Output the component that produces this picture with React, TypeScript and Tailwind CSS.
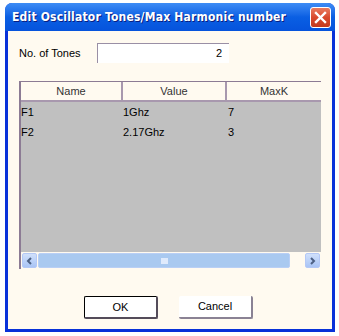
import React from 'react'

const rows = [
  { name: 'F1', value: '1Ghz', maxk: '7' },
  { name: 'F2', value: '2.17Ghz', maxk: '3' },
]

function CloseButton() {
  return (
    <div className="w-[21px] h-[21px] rounded-[3px] border border-white bg-gradient-to-b from-[#e87a5e] via-[#d9492c] to-[#c23a1e] flex items-center justify-center">
      <svg width="13" height="13" viewBox="0 0 13 13">
        <path d="M2 2 L11 11 M11 2 L2 11" stroke="white" strokeWidth="2.4" strokeLinecap="square" />
      </svg>
    </div>
  )
}

function ScrollArrow({ dir }: { dir: 'left' | 'right' }) {
  return (
    <div className="w-[15px] h-[15px] rounded-[2px] border border-[#b4c8f6] bg-gradient-to-b from-[#d0e0fb] to-[#a9c4f5] flex items-center justify-center">
      <svg width="7" height="8" viewBox="0 0 7 8">
        <path d={dir === 'left' ? 'M5 1 L2 4 L5 7' : 'M2 1 L5 4 L2 7'} stroke="#4d6185" strokeWidth="2" fill="none" />
      </svg>
    </div>
  )
}

export default function App() {
  return (
    <div className="w-[339px] h-[336px] bg-white relative overflow-hidden" style={{ fontFamily: '"Liberation Sans", Arial, sans-serif' }}>
      <div className="absolute left-[5px] top-[3px] w-[330px] h-[329px] flex flex-col rounded-t-[7px] overflow-hidden bg-[#0831d9]">
        <div className="h-[28px] shrink-0 flex items-center justify-between pl-[7px] pr-[4px] bg-gradient-to-b from-[#3d8cf5] via-[#0a5fe3] to-[#0653dc]">
          <span className="text-white font-bold text-[12px] tracking-[0.2px] [text-shadow:1px_1px_#0a1e80]" style={{ fontFamily: '"DejaVu Sans Condensed", "DejaVu Sans", sans-serif' }}>
            Edit Oscillator Tones/Max Harmonic number
          </span>
          <CloseButton />
        </div>
        <div className="flex-1 mx-[3px] mb-[3px] bg-[#fffaf0] flex flex-col text-[11px] text-black">
          <div className="flex items-center mt-[12px] pl-[11px]">
            <span className="w-[78px]">No. of Tones</span>
            <div className="w-[132px] h-[20px] bg-white border-t border-l border-[#9a8fa5] flex items-center justify-end pr-[7px]">2</div>
          </div>
          <div className="mt-[18px] ml-[11px] w-[302px] h-[188px] border-l-2 border-t border-[#8c7b94] flex flex-col bg-[#c0c0c0]">
            <div className="h-[20px] shrink-0 flex bg-[#fffaf0] text-[#333]">
              <div className="w-[102px] flex items-center justify-center border-r-2 border-b-2 border-[#a898ae]">Name</div>
              <div className="w-[104px] flex items-center justify-center border-r-2 border-b-2 border-[#a898ae]">Value</div>
              <div className="flex-1 flex items-center justify-center border-b-2 border-[#a898ae]">MaxK</div>
            </div>
            <div className="flex-1">
              {rows.map(r => (
                <div key={r.name} className="h-[20px] flex items-center">
                  <div className="w-[102px]">{r.name}</div>
                  <div className="w-[104px]">{r.value}</div>
                  <div className="flex-1 pl-[1px]">{r.maxk}</div>
                </div>
              ))}
            </div>
            <div className="h-[17px] shrink-0 flex items-center bg-[#fffaf0] px-[1px] gap-[1px]">
              <ScrollArrow dir="left" />
              <div className="flex-1 h-[15px] rounded-[2px] border border-[#b9cff5] bg-[#a9c9f0] flex items-center justify-center">
                <div className="w-[7px] h-[6px] bg-[#dfeafc]" />
              </div>
              <div className="w-[13px]" />
              <ScrollArrow dir="right" />
            </div>
          </div>
          <div className="flex justify-center gap-[21px] mt-[27px] pr-[3px]">
            <button className="w-[74px] h-[23px] bg-white border border-black rounded-[2px] border-r-2 border-b-2 border-r-[#544c5a] border-b-[#544c5a]">OK</button>
            <button className="w-[74px] h-[23px] bg-white rounded-[2px] border-r-2 border-b-2 border-[#8a8294]">Cancel</button>
          </div>
        </div>
      </div>
    </div>
  )
}
